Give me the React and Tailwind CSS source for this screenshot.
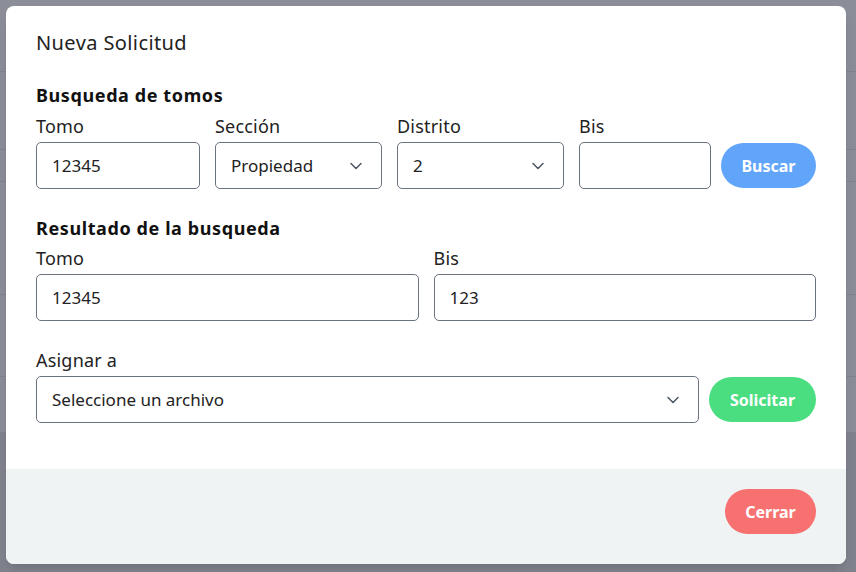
import React from "react";

const font = { fontFamily: '"Noto Sans", "Open Sans", sans-serif' };

function Chevron() {
  return (
    <svg width="14" height="14" viewBox="0 0 14 14" fill="none" className="shrink-0">
      <path d="M2 4.5l5 5 5-5" stroke="#4b5563" strokeWidth="1.5" strokeLinecap="round" strokeLinejoin="round" />
    </svg>
  );
}

function Field({ label, value, className = "", select = false }) {
  return (
    <div className={`flex flex-col ${className}`}>
      <span className="text-[18px] leading-[26px] text-[#222] tracking-[0.2px]">{label}</span>
      <div className="mt-[3px] h-[47px] rounded-[5px] border border-[#6b7280] bg-white flex items-center justify-between pl-[15px] pr-[18px] text-[17px] text-[#222]">
        <span>{value}</span>
        {select && <Chevron />}
      </div>
    </div>
  );
}

export default function App() {
  return (
    <div className="relative w-[856px] h-[572px] overflow-hidden bg-[#8b8e99]" style={font}>
      <div className="flex flex-col">
        <div className="h-[72px] border-b border-[#80838d]" />
        <div className="h-[78px] border-b border-[#80838d]" />
        <div className="h-[32px] border-b border-[#80838d]" />
        <div className="h-[113px] border-b border-[#80838d]" />
        <div className="h-[82px] border-b border-[#80838d]" />
        <div className="h-[55px]" />
        <div className="h-[140px] bg-[#80838e]" />
      </div>
      <div className="absolute left-[6px] top-[6px] w-[840px] h-[558px] rounded-[8px] bg-white overflow-hidden flex flex-col shadow-lg">
        <div className="flex-1 px-[30px] pt-[22px]">
          <h2 className="text-[20px] leading-[30px] text-[#222] tracking-[0.4px]">Nueva Solicitud</h2>
          <h3 className="mt-[25px] mb-[6px] text-[18px] leading-[24px] font-bold tracking-[0.6px] text-[#111]">Busqueda de tomos</h3>
          <div className="flex items-end gap-[15px]">
            <Field label="Tomo" value="12345" className="w-[164px]" />
            <Field label="Sección" value="Propiedad" select className="w-[167px]" />
            <Field label="Distrito" value="2" select className="w-[167px]" />
            <Field label="Bis" value="" className="w-[132px]" />
            <button className="ml-[-5px] mb-[1px] h-[45px] w-[95px] rounded-full bg-[#60a5fa] text-white font-bold text-[16px]">Buscar</button>
          </div>
          <h3 className="mt-[27px] mb-[5px] text-[18px] leading-[24px] font-bold tracking-[0.6px] text-[#111]">Resultado de la busqueda</h3>
          <div className="flex gap-[15px]">
            <Field label="Tomo" value="12345" className="flex-1" />
            <Field label="Bis" value="123" className="flex-1" />
          </div>
          <div className="mt-[26px] flex items-end gap-[10px]">
            <Field label="Asignar a" value="Seleccione un archivo" select className="flex-1" />
            <button className="mb-[1px] h-[45px] w-[107px] rounded-full bg-[#4ade80] text-white font-bold text-[16px]">Solicitar</button>
          </div>
        </div>
        <div className="h-[95px] bg-[#f0f3f4] flex items-start justify-end pt-[20px] pr-[30px]">
          <button className="h-[45px] w-[91px] rounded-full bg-[#f87171] text-white font-bold text-[16px]">Cerrar</button>
        </div>
      </div>
    </div>
  );
}
